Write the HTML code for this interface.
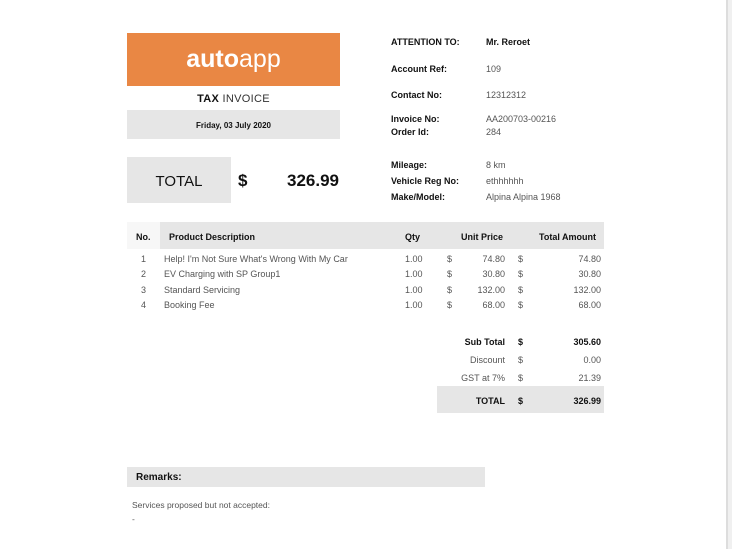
<!DOCTYPE html>
<html><head><style>
body{margin:0;width:732px;height:549px;background:#fff;position:relative;overflow:hidden;font-family:"Liberation Sans",sans-serif;color:#111;}
.a{position:absolute;white-space:nowrap}
.b{font-weight:bold}
.s{font-size:9px}
.g{color:#555}
.r{text-align:right}
</style></head><body>
<div class="a" style="left:726px;top:0;width:2px;height:549px;background:#ddd"></div>
<div class="a" style="left:728px;top:0;width:4px;height:549px;background:#f0f0f0"></div>

<div class="a" style="left:127px;top:33px;width:213px;height:53px;background:#e98744"></div>
<div class="a" style="left:127px;top:45px;width:213px;text-align:center;color:#fff;font-size:25px"><b>auto</b>app</div>
<div class="a" style="left:127px;top:93px;width:213px;text-align:center;font-size:11px;letter-spacing:.3px"><b>TAX</b> <span style="color:#333">INVOICE</span></div>
<div class="a" style="left:127px;top:110px;width:213px;height:29px;background:#e6e6e6"></div>
<div class="a b" style="left:127px;top:121px;width:213px;text-align:center;font-size:8px">Friday, 03 July 2020</div>
<div class="a" style="left:127px;top:157px;width:104px;height:46px;background:#e6e6e6"></div>
<div class="a" style="left:127px;top:173px;width:104px;text-align:center;font-size:15px">TOTAL</div>
<div class="a b" style="left:238px;top:171px;font-size:17px">$</div>
<div class="a b r" style="left:270px;top:171px;width:69px;font-size:17px">326.99</div>

<div class="a b s" style="left:391px;top:37px">ATTENTION TO:</div><div class="a b s" style="left:486px;top:37px">Mr. Reroet</div>
<div class="a b s" style="left:391px;top:64px">Account Ref:</div><div class="a s g" style="left:486px;top:64px">109</div>
<div class="a b s" style="left:391px;top:90px">Contact No:</div><div class="a s g" style="left:486px;top:90px">12312312</div>
<div class="a b s" style="left:391px;top:114px">Invoice No:</div><div class="a s g" style="left:486px;top:114px">AA200703-00216</div>
<div class="a b s" style="left:391px;top:127px">Order Id:</div><div class="a s g" style="left:486px;top:127px">284</div>
<div class="a b s" style="left:391px;top:160px">Mileage:</div><div class="a s g" style="left:486px;top:160px">8 km</div>
<div class="a b s" style="left:391px;top:176px">Vehicle Reg No:</div><div class="a s g" style="left:486px;top:176px">ethhhhhh</div>
<div class="a b s" style="left:391px;top:192px">Make/Model:</div><div class="a s g" style="left:486px;top:192px">Alpina Alpina 1968</div>

<div class="a" style="left:127px;top:222px;width:33px;height:27px;background:#f7f7f7"></div>
<div class="a" style="left:160px;top:222px;width:444px;height:27px;background:#e6e6e6"></div>
<div class="a b s" style="left:136px;top:232px">No.</div>
<div class="a b s" style="left:169px;top:232px">Product Description</div>
<div class="a b s" style="left:405px;top:232px">Qty</div>
<div class="a b s" style="left:461px;top:232px">Unit Price</div>
<div class="a b s" style="left:539px;top:232px">Total Amount</div>

<div class="a s g" style="left:141px;top:254px">1</div><div class="a s g" style="left:164px;top:254px">Help! I'm Not Sure What's Wrong With My Car</div><div class="a s g" style="left:405px;top:254px">1.00</div><div class="a s g" style="left:447px;top:254px">$</div><div class="a s g r" style="left:455px;top:254px;width:50px">74.80</div><div class="a s g" style="left:518px;top:254px">$</div><div class="a s g r" style="left:540px;top:254px;width:61px">74.80</div>
<div class="a s g" style="left:141px;top:269px">2</div><div class="a s g" style="left:164px;top:269px">EV Charging with SP Group1</div><div class="a s g" style="left:405px;top:269px">1.00</div><div class="a s g" style="left:447px;top:269px">$</div><div class="a s g r" style="left:455px;top:269px;width:50px">30.80</div><div class="a s g" style="left:518px;top:269px">$</div><div class="a s g r" style="left:540px;top:269px;width:61px">30.80</div>
<div class="a s g" style="left:141px;top:285px">3</div><div class="a s g" style="left:164px;top:285px">Standard Servicing</div><div class="a s g" style="left:405px;top:285px">1.00</div><div class="a s g" style="left:447px;top:285px">$</div><div class="a s g r" style="left:455px;top:285px;width:50px">132.00</div><div class="a s g" style="left:518px;top:285px">$</div><div class="a s g r" style="left:540px;top:285px;width:61px">132.00</div>
<div class="a s g" style="left:141px;top:300px">4</div><div class="a s g" style="left:164px;top:300px">Booking Fee</div><div class="a s g" style="left:405px;top:300px">1.00</div><div class="a s g" style="left:447px;top:300px">$</div><div class="a s g r" style="left:455px;top:300px;width:50px">68.00</div><div class="a s g" style="left:518px;top:300px">$</div><div class="a s g r" style="left:540px;top:300px;width:61px">68.00</div>

<div class="a b s r" style="left:440px;top:337px;width:65px">Sub Total</div><div class="a b s" style="left:518px;top:337px">$</div><div class="a b s r" style="left:540px;top:337px;width:61px">305.60</div>
<div class="a s g r" style="left:440px;top:355px;width:65px">Discount</div><div class="a s g" style="left:518px;top:355px">$</div><div class="a s g r" style="left:540px;top:355px;width:61px">0.00</div>
<div class="a s g r" style="left:440px;top:373px;width:65px">GST at 7%</div><div class="a s g" style="left:518px;top:373px">$</div><div class="a s g r" style="left:540px;top:373px;width:61px">21.39</div>
<div class="a" style="left:437px;top:386px;width:167px;height:27px;background:#e6e6e6"></div>
<div class="a b s r" style="left:440px;top:396px;width:65px">TOTAL</div><div class="a b s" style="left:518px;top:396px">$</div><div class="a b s r" style="left:540px;top:396px;width:61px">326.99</div>

<div class="a" style="left:127px;top:467px;width:358px;height:20px;background:#e6e6e6"></div>
<div class="a b" style="left:136px;top:472px;font-size:10px">Remarks:</div>
<div class="a g" style="left:132px;top:500px;font-size:8.5px">Services proposed but not accepted:</div>
<div class="a g" style="left:132px;top:514px;font-size:8.5px">-</div>
</body></html>
